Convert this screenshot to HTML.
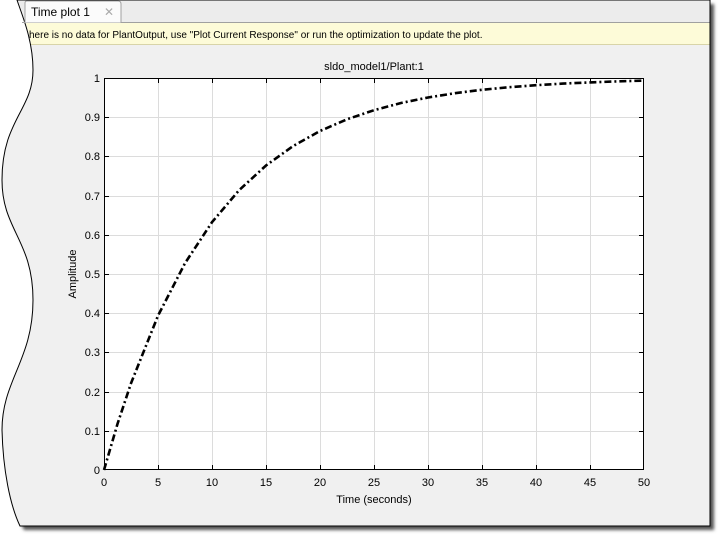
<!DOCTYPE html>
<html><head><style>
html,body{margin:0;padding:0;background:#fff;width:726px;height:541px;overflow:hidden}
svg text{font-family:"Liberation Sans",Arial,sans-serif}
</style></head><body>
<svg width="726" height="541" viewBox="0 0 726 541" xmlns="http://www.w3.org/2000/svg">
<defs><filter id="b" x="-5%" y="-5%" width="110%" height="110%"><feGaussianBlur stdDeviation="1.5"/></filter></defs>
<path transform="translate(4,4)" d="M17,0 L710,0 L710,526 L20,526 C10,505 3,470 2,430 C2,380 33,360 33,300 C33,240 2,230 2,180 C2,120 33,110 33,70 C33,40 22,15 17,0 Z" fill="#555" filter="url(#b)"/>
<path d="M17,0 L710,0 L710,526 L20,526 C10,505 3,470 2,430 C2,380 33,360 33,300 C33,240 2,230 2,180 C2,120 33,110 33,70 C33,40 22,15 17,0 Z" fill="#f0f0f0" stroke="#000" stroke-width="1"/>
<path d="M18,0.5 L709.5,0.5 L709.5,22.5 L26,22.5 C24,14 21,7 18,0.5 Z" fill="#ececec"/>
<line x1="22" y1="22.5" x2="710" y2="22.5" stroke="#a0a0a0"/>
<path d="M25,22.5 L25,3 Q25,1 27,1 L118,1 Q121,1 121,4 L121,22.5" fill="#fbfbfb" stroke="#a0a0a0"/>
<text x="31" y="16" font-size="12" fill="#000">Time plot 1</text>
<text x="104" y="16" font-size="12" fill="#aaa">✕</text>
<path d="M26,23 L709.5,23 L709.5,44 L31,44 C30,37 28,30 26,23 Z" fill="#fdfbd8"/>
<line x1="31" y1="44.5" x2="710" y2="44.5" stroke="#d8d4a8"/>
<text x="29" y="38" font-size="10" fill="#000">here is no data for PlantOutput, use "Plot Current Response" or run the optimization to update the plot.</text>
<line x1="710" y1="0" x2="710" y2="526" stroke="#000"/>
<rect x="104" y="78" width="540" height="392" fill="#fff"/>
<g stroke="#dcdcdc" stroke-width="1">
<line x1="158.5" y1="78" x2="158.5" y2="470"/><line x1="212.5" y1="78" x2="212.5" y2="470"/><line x1="266.5" y1="78" x2="266.5" y2="470"/><line x1="320.5" y1="78" x2="320.5" y2="470"/><line x1="374.5" y1="78" x2="374.5" y2="470"/><line x1="428.5" y1="78" x2="428.5" y2="470"/><line x1="482.5" y1="78" x2="482.5" y2="470"/><line x1="536.5" y1="78" x2="536.5" y2="470"/><line x1="590.5" y1="78" x2="590.5" y2="470"/>
<line x1="104" y1="117.5" x2="644" y2="117.5"/><line x1="104" y1="156.5" x2="644" y2="156.5"/><line x1="104" y1="196.5" x2="644" y2="196.5"/><line x1="104" y1="235.5" x2="644" y2="235.5"/><line x1="104" y1="274.5" x2="644" y2="274.5"/><line x1="104" y1="313.5" x2="644" y2="313.5"/><line x1="104" y1="352.5" x2="644" y2="352.5"/><line x1="104" y1="392.5" x2="644" y2="392.5"/><line x1="104" y1="431.5" x2="644" y2="431.5"/>
</g>
<g stroke="#000" stroke-width="1">
<path d="M158.5,470v-5M212.5,470v-5M266.5,470v-5M320.5,470v-5M374.5,470v-5M428.5,470v-5M482.5,470v-5M536.5,470v-5M590.5,470v-5M158.5,78v5M212.5,78v5M266.5,78v5M320.5,78v5M374.5,78v5M428.5,78v5M482.5,78v5M536.5,78v5M590.5,78v5"/>
<path d="M104,117.5h5M104,156.5h5M104,196.5h5M104,235.5h5M104,274.5h5M104,313.5h5M104,352.5h5M104,392.5h5M104,431.5h5M644,117.5h-5M644,156.5h-5M644,196.5h-5M644,235.5h-5M644,274.5h-5M644,313.5h-5M644,352.5h-5M644,392.5h-5M644,431.5h-5"/>
<rect x="104.5" y="78.5" width="539" height="391" fill="none"/>
</g>
<polyline fill="none" stroke="#000" stroke-width="2.6" stroke-dasharray="7,3,2,3" points="104,470 117.5,423.9 131,383.3 158,315.7 185,263.2 212,222.2 239,190.3 266,165.5 293,146.1 320,131 347,119.3 374,110.2 401,103 428,97.5 455,93.2 482,89.8 509,87.2 536,85.2 563,83.6 590,82.4 617,81.4 644,80.6"/>
<g font-size="11" fill="#000" text-anchor="end">
<text x="100" y="82">1</text><text x="100" y="121">0.9</text><text x="100" y="160">0.8</text><text x="100" y="200">0.7</text><text x="100" y="239">0.6</text><text x="100" y="278">0.5</text><text x="100" y="317">0.4</text><text x="100" y="356">0.3</text><text x="100" y="396">0.2</text><text x="100" y="435">0.1</text><text x="100" y="474">0</text>
</g>
<g font-size="11" fill="#000" text-anchor="middle">
<text x="104" y="486">0</text><text x="158" y="486">5</text><text x="212" y="486">10</text><text x="266" y="486">15</text><text x="320" y="486">20</text><text x="374" y="486">25</text><text x="428" y="486">30</text><text x="482" y="486">35</text><text x="536" y="486">40</text><text x="590" y="486">45</text><text x="644" y="486">50</text>
<text x="374" y="503">Time (seconds)</text>
<text x="374" y="70">sldo_model1/Plant:1</text>
<text transform="translate(76,274) rotate(-90)">Amplitude</text>
</g>
</svg>
</body></html>
